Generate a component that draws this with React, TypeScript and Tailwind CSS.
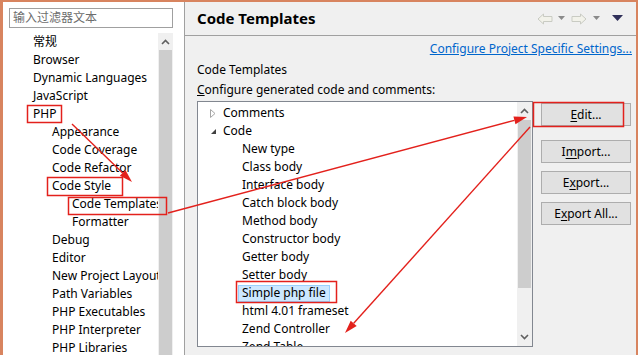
import React from 'react';

const leftItems: { t: string; l: number }[] = [
  { t: '常规', l: 1 },
  { t: 'Browser', l: 1 },
  { t: 'Dynamic Languages', l: 1 },
  { t: 'JavaScript', l: 1 },
  { t: 'PHP', l: 1 },
  { t: 'Appearance', l: 2 },
  { t: 'Code Coverage', l: 2 },
  { t: 'Code Refactor', l: 2 },
  { t: 'Code Style', l: 2 },
  { t: 'Code Templates', l: 3 },
  { t: 'Formatter', l: 3 },
  { t: 'Debug', l: 2 },
  { t: 'Editor', l: 2 },
  { t: 'New Project Layout', l: 2 },
  { t: 'Path Variables', l: 2 },
  { t: 'PHP Executables', l: 2 },
  { t: 'PHP Interpreter', l: 2 },
  { t: 'PHP Libraries', l: 2 },
];

const templates = [
  'New type',
  'Class body',
  'Interface body',
  'Catch block body',
  'Method body',
  'Constructor body',
  'Getter body',
  'Setter body',
  'Simple php file',
  'html 4.01 frameset',
  'Zend Controller',
  'Zend Table',
];

const font = { fontFamily: '"Segoe UI", "Noto Sans", "Noto Sans CJK SC", sans-serif' };

function Caret({ dir }: { dir: 'up' | 'down' }) {
  return (
    <svg width="9" height="6" viewBox="0 0 9 6">
      <path
        d={dir === 'up' ? 'M1 5 L4.5 1.5 L8 5' : 'M1 1 L4.5 4.5 L8 1'}
        fill="none"
        stroke="#606060"
        strokeWidth="1.6"
      />
    </svg>
  );
}

function NavArrow({ flip }: { flip?: boolean }) {
  return (
    <svg width="16" height="12" viewBox="0 0 16 12" style={flip ? { transform: 'scaleX(-1)' } : undefined}>
      <path d="M1 6 L6.5 1 L6.5 3.5 L15 3.5 L15 8.5 L6.5 8.5 L6.5 11 Z" fill="#f2f2ea" stroke="#c9cbc3" strokeWidth="1" />
    </svg>
  );
}

function Drop({ dark }: { dark?: boolean }) {
  return (
    <svg width={dark ? 11 : 7} height={dark ? 7 : 5} viewBox={dark ? '0 0 11 7' : '0 0 7 5'}>
      <path d={dark ? 'M0 0 L11 0 L5.5 6 Z' : 'M0 0 L7 0 L3.5 4 Z'} fill={dark ? '#30305a' : '#8a8a8a'} />
    </svg>
  );
}

function Arrow({ x1, y1, x2, y2 }: { x1: number; y1: number; x2: number; y2: number }) {
  const dx = x2 - x1;
  const dy = y2 - y1;
  const len = Math.hypot(dx, dy);
  const ux = dx / len;
  const uy = dy / len;
  const bx = x2 - ux * 13;
  const by = y2 - uy * 13;
  const pts = `${x2},${y2} ${bx - uy * 4},${by + ux * 4} ${bx + uy * 4},${by - ux * 4}`;
  return (
    <g>
      <line x1={x1} y1={y1} x2={bx} y2={by} stroke="#e3211c" strokeWidth="1.4" />
      <polygon points={pts} fill="#e3211c" />
    </g>
  );
}

function Btn({ pre, u, post }: { pre: string; u: string; post: string }) {
  return (
    <div className="flex h-[23px] items-center justify-center border border-[#adadad] bg-[#e1e1e1] text-[12px] text-black">
      {pre}
      <span className="underline underline-offset-2">{u}</span>
      {post}
    </div>
  );
}

export default function App() {
  return (
    <div
      className="relative flex h-[355px] w-[638px] overflow-hidden border-t-2 border-r-2 border-l-[3px] border-[#d8845f] bg-[#f0f0f0] text-[12px] text-black"
      style={font}
    >
      {/* left: preference tree */}
      <div className="flex w-[182px] shrink-0 flex-col border-r border-[#a0a0a0] bg-white">
        <div className="pl-[6px] pt-[6px]">
          <div className="flex h-[20px] w-[164px] items-center border border-[#a0a0a0] pl-[3px] text-[12px] text-[#6d6d6d]">
            输入过滤器文本
          </div>
        </div>
        <div className="mt-[5px] flex flex-1 overflow-hidden pr-[11px]">
          <div className="flex-1 overflow-hidden">
            {leftItems.map((it, i) => (
              <div
                key={i}
                className={`flex h-[18px] items-center whitespace-nowrap ${
                  it.l === 1 ? 'pl-[30px]' : it.l === 2 ? 'pl-[49px]' : 'pl-[69px]'
                }`}
              >
                {it.t}
              </div>
            ))}
          </div>
          <div className="flex w-[15px] flex-col bg-[#f0f0f0]">
            <div className="flex h-[17px] items-center justify-center">
              <Caret dir="up" />
            </div>
            <div className="mx-px flex-1 bg-[#cdcdcd]" />
          </div>
        </div>
      </div>

      {/* right: code templates page */}
      <div className="flex flex-1 flex-col">
        <div className="flex h-[34px] items-center border-b border-[#a0a0a0] pl-[12px] pr-[13px]">
          <span className="flex-1 text-[15px] font-bold">Code Templates</span>
          <div className="flex items-center">
            <NavArrow />
            <span className="ml-[5px]"><Drop /></span>
            <span className="ml-[6px]"><NavArrow flip /></span>
            <span className="ml-[6px]"><Drop /></span>
            <span className="ml-[12px]"><Drop dark /></span>
          </div>
        </div>

        <div className="flex flex-1 flex-col pl-[12px] pr-[4px] pt-[5px]">
          <div className="h-[16px] text-right leading-[16px] text-[#0066cc] underline">
            Configure Project Specific Settings...
          </div>
          <div className="mt-[5px] h-[16px] leading-[16px]">Code Templates</div>
          <div className="mt-[4px] h-[16px] leading-[16px]">
            <span className="underline">C</span>onfigure generated code and comments:
          </div>

          <div className="mt-[3px] flex gap-[8px]">
            <div className="flex h-[246px] w-[336px] border border-[#828790] bg-white">
              <div className="flex-1 overflow-hidden pt-[2px]">
                <div className="flex h-[18px] items-center">
                  <span className="ml-[12px] flex w-[13px] items-center">
                    <svg width="6" height="9" viewBox="0 0 6 9">
                      <path d="M0.5 0.5 L5 4.5 L0.5 8.5 Z" fill="none" stroke="#a6a6a6" />
                    </svg>
                  </span>
                  Comments
                </div>
                <div className="flex h-[18px] items-center">
                  <span className="ml-[12px] flex w-[13px] items-center">
                    <svg width="7" height="7" viewBox="0 0 7 7">
                      <path d="M6 1 L6 6 L1 6 Z" fill="#404040" />
                    </svg>
                  </span>
                  Code
                </div>
                {templates.map((t) =>
                  t === 'Simple php file' ? (
                    <div key={t} className="flex h-[18px] items-center pl-[40px]">
                      <span className="flex h-[17px] items-center border border-[#99d1ff] bg-[#cce8ff] px-[3px]">{t}</span>
                    </div>
                  ) : (
                    <div key={t} className="flex h-[18px] items-center pl-[44px]">
                      {t}
                    </div>
                  ),
                )}
              </div>
              <div className="flex w-[15px] flex-col bg-[#f0f0f0]">
                <div className="flex h-[18px] items-center justify-center">
                  <Caret dir="up" />
                </div>
                <div className="mx-px h-[168px] bg-[#cdcdcd]" />
                <div className="flex-1" />
                <div className="flex h-[18px] items-center justify-center">
                  <Caret dir="down" />
                </div>
              </div>
            </div>

            <div className="flex w-[90px] flex-col pt-[2px]">
              <Btn pre="" u="E" post="dit..." />
              <div className="mt-[14px] flex flex-col gap-[8px]">
                <Btn pre="I" u="m" post="port..." />
                <Btn pre="E" u="x" post="port..." />
                <Btn pre="E" u="x" post="port All..." />
              </div>
            </div>
          </div>
        </div>
      </div>

      {/* red annotations over the screenshot */}
      <svg className="pointer-events-none absolute left-[-3px] top-[-2px]" width="638" height="355">
        <g fill="none" stroke="#e3211c" strokeWidth="1.5">
          <rect x="27.5" y="105.5" width="34" height="17" />
          <rect x="47.5" y="177.5" width="75" height="18" />
          <rect x="68.5" y="197.5" width="98" height="17" />
          <rect x="533.5" y="102.5" width="90" height="24" />
          <rect x="236.5" y="281.5" width="100" height="21" />
        </g>
        <Arrow x1={72} y1={124} x2={132} y2={182} />
        <Arrow x1={168} y1={213} x2={527} y2={117} />
        <Arrow x1={530} y1={127} x2={345} y2={333} />
      </svg>
    </div>
  );
}
